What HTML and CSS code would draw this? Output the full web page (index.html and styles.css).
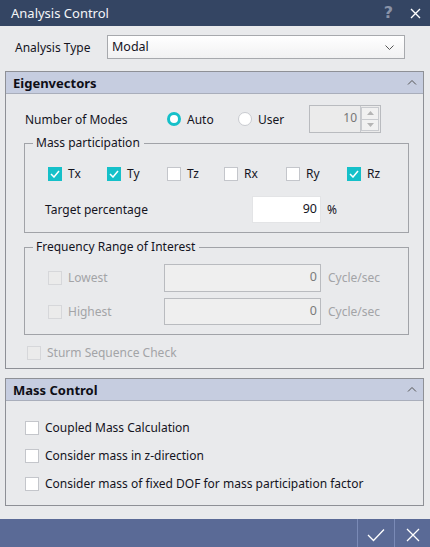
FILE: index.html
```html
<!DOCTYPE html>
<html>
<head>
<meta charset="utf-8">
<link rel="stylesheet" href="styles.css">
</head>
<body>
<div class="dialog">
  <header class="titlebar">
    <span class="title">Analysis Control</span>
    <span class="tb-icons">
      <span class="help">?</span>
      <svg class="tb-close" width="11" height="11" viewBox="0 0 11 11"><path d="M1 1L10 10M10 1L1 10" stroke="#fff" stroke-width="1.4" fill="none"/></svg>
    </span>
  </header>

  <main class="content">
    <div class="type-row">
      <span class="type-label">Analysis Type</span>
      <div class="select">
        <span>Modal</span>
        <svg width="9" height="5" viewBox="0 0 9 5"><path d="M0.5 0.5L4.5 4.5L8.5 0.5" stroke="#555" stroke-width="1" fill="none"/></svg>
      </div>
    </div>

    <section class="panel">
      <div class="panel-header">
        <span>Eigenvectors</span>
        <svg width="10" height="6" viewBox="0 0 10 6"><path d="M1 5.5L5 1.5L9 5.5" stroke="#555" stroke-width="1" fill="none"/></svg>
      </div>
      <div class="panel-body eig-body">
        <div class="modes-row">
          <span class="modes-label">Number of Modes</span>
          <span class="radio on"></span><span class="radio-text">Auto</span>
          <span class="radio"></span><span class="radio-text user">User</span>
          <div class="spin">
            <span class="spin-val">10</span>
            <span class="spin-btns">
              <span class="spin-btn"><svg width="7" height="4" viewBox="0 0 7 4"><path d="M0 4L3.5 0L7 4Z" fill="#b5b5b5"/></svg></span>
              <span class="spin-btn"><svg width="7" height="4" viewBox="0 0 7 4"><path d="M0 0L3.5 4L7 0Z" fill="#b5b5b5"/></svg></span>
            </span>
          </div>
        </div>

        <fieldset class="group mass-group">
          <legend>Mass participation</legend>
          <div class="dof-row">
            <label class="check"><span class="box checked"><svg width="10" height="8" viewBox="0 0 10 8"><path d="M1 4L4 7L9 1" stroke="#fff" stroke-width="1.5" fill="none"/></svg></span>Tx</label>
            <label class="check"><span class="box checked"><svg width="10" height="8" viewBox="0 0 10 8"><path d="M1 4L4 7L9 1" stroke="#fff" stroke-width="1.5" fill="none"/></svg></span>Ty</label>
            <label class="check"><span class="box"></span>Tz</label>
            <label class="check"><span class="box"></span>Rx</label>
            <label class="check"><span class="box"></span>Ry</label>
            <label class="check"><span class="box checked"><svg width="10" height="8" viewBox="0 0 10 8"><path d="M1 4L4 7L9 1" stroke="#fff" stroke-width="1.5" fill="none"/></svg></span>Rz</label>
          </div>
          <div class="target-row">
            <span class="target-label">Target percentage</span>
            <span class="num-input">90</span>
            <span class="unit">%</span>
          </div>
        </fieldset>

        <fieldset class="group freq-group">
          <legend>Frequency Range of Interest</legend>
          <div class="freq-row">
            <label class="check disabled"><span class="box"></span>Lowest</label>
            <span class="num-input dis">0</span>
            <span class="unit dis-text">Cycle/sec</span>
          </div>
          <div class="freq-row">
            <label class="check disabled"><span class="box"></span>Highest</label>
            <span class="num-input dis">0</span>
            <span class="unit dis-text">Cycle/sec</span>
          </div>
        </fieldset>

        <label class="check disabled sturm"><span class="box"></span>Sturm Sequence Check</label>
      </div>
    </section>

    <section class="panel mass-panel">
      <div class="panel-header">
        <span>Mass Control</span>
        <svg width="10" height="6" viewBox="0 0 10 6"><path d="M1 5.5L5 1.5L9 5.5" stroke="#555" stroke-width="1" fill="none"/></svg>
      </div>
      <div class="panel-body mass-body">
        <label class="check"><span class="box"></span>Coupled Mass Calculation</label>
        <label class="check"><span class="box"></span>Consider mass in z-direction</label>
        <label class="check"><span class="box"></span>Consider mass of fixed DOF for mass participation factor</label>
      </div>
    </section>
  </main>

  <footer class="bottombar">
    <button class="bb-btn ok"><svg width="18" height="14" viewBox="0 0 18 14"><path d="M1 7L6.5 12.5L17 1.5" stroke="#fff" stroke-width="1.3" fill="none"/></svg></button>
    <button class="bb-btn cancel"><svg width="14" height="14" viewBox="0 0 14 14"><path d="M1 1L13 13M13 1L1 13" stroke="#fff" stroke-width="1.3" fill="none"/></svg></button>
  </footer>
</div>
</body>
</html>
```

FILE: styles.css
```css
* { box-sizing: border-box; }
html, body { margin: 0; padding: 0; }
body {
  width: 430px;
  height: 547px;
  overflow: hidden;
  font-family: "Noto Sans", "Open Sans", sans-serif;
  font-size: 12px;
  line-height: 16px;
  color: #14141e;
  background: #e9eaec;
}
.dialog {
  width: 430px;
  height: 547px;
  display: flex;
  flex-direction: column;
}
.titlebar {
  height: 26px;
  background: #344563;
  display: flex;
  align-items: center;
  padding: 0 9px 0 11px;
  color: #f4f5f8;
  flex: none;
}
.title { font-size: 13px; flex: 1; }
.tb-icons { display: flex; align-items: center; gap: 17px; }
.help { color: #8a93a8; font-weight: bold; font-size: 16px; font-family: "DejaVu Sans", sans-serif; line-height: 16px; }
.tb-close { display: block; }

.content {
  flex: 1;
  min-height: 0;
  display: flex;
  flex-direction: column;
  padding: 9px 6px 0 5px;
}
.type-row {
  display: flex;
  align-items: center;
  height: 24px;
  flex: none;
}
.type-label { width: 102px; padding-left: 10px; padding-top: 2px; }
.select {
  width: 298px;
  height: 24px;
  border: 1px solid #a7a9ad;
  background: linear-gradient(#ffffff, #f1f1f2);
  display: flex;
  align-items: center;
  justify-content: space-between;
  padding: 0 10px 0 4px;
  font-size: 12.5px;
}
.select svg { display: block; }

.panel {
  margin-top: 12px;
  border: 1px solid #8e9096;
  display: flex;
  flex-direction: column;
  flex: none;
}
.panel-header {
  height: 22px;
  background: #c6cde0;
  border-bottom: 1px solid #a9aebb;
  display: flex;
  align-items: center;
  justify-content: space-between;
  padding: 0 6px 0 7px;
  font-weight: bold;
  font-size: 13px;
  color: #0e0e16;
}
.panel-header svg { display: block; margin-top: -2px; }
.panel-body { display: flex; flex-direction: column; }
.eig-body { padding: 11px 14px 7px 18px; }

.modes-row {
  display: flex;
  align-items: center;
  height: 28px;
}
.modes-label { width: 143px; padding-left: 1px; padding-top: 1px; }
.radio {
  width: 14px;
  height: 14px;
  border-radius: 50%;
  background: #fff;
  border: 1px solid #c9cbd0;
  flex: none;
}
.radio.on { border: 3px solid #15c0c9; }
.radio-text { margin-left: 6px; width: 51px; padding-top: 1px; }
.radio-text.user { width: 51px; }
.spin {
  width: 72px;
  height: 28px;
  border: 1px solid #b9bbbf;
  background: #ebebeb;
  display: flex;
  align-items: stretch;
}
.spin-val {
  flex: 1;
  text-align: right;
  padding-right: 3px;
  color: #767676;
  line-height: 24px;
}
.spin-btns {
  width: 20px;
  display: flex;
  flex-direction: column;
  border-left: 1px solid #c6c8cc;
  padding: 1px 1px 1px 0;
}
.spin-btn {
  flex: 1;
  display: flex;
  align-items: center;
  justify-content: center;
  border: 1px solid #c9cbcf;
  background: #f1f1f1;
}
.spin-btn + .spin-btn { border-top: none; }
.spin-btn svg { display: block; }

.group {
  margin: 2px 0 0 0;
  border: 1px solid #a1a3a8;
  padding: 0 0 9px 23px;
}
.group legend {
  padding: 0 4px 0 3px;
  margin-left: -15px;
  line-height: 16px;
}
.mass-group { margin-top: 2px; }
.dof-row {
  display: grid;
  grid-template-columns: 59px 60px 57px 62px 61px auto;
  margin-top: 15px;
  height: 16px;
  align-items: center;
}
.check {
  display: flex;
  align-items: center;
  gap: 6px;
  white-space: nowrap;
  height: 16px;
}
.box {
  width: 14px;
  height: 14px;
  border: 1px solid #c4c6cb;
  background: #fff;
  flex: none;
  display: flex;
  align-items: center;
  justify-content: center;
}
.box.checked { background: #15c0c9; border-color: #15c0c9; }
.box svg { display: block; }
.check.disabled { color: #a3a4a7; }
.check.disabled .box { background: #ebebeb; border-color: #d6d7da; }

.target-row {
  display: flex;
  align-items: center;
  margin-top: 14px;
  height: 27px;
}
.target-label { width: 207px; margin-left: -3px; }
.num-input {
  width: 69px;
  height: 27px;
  background: #fff;
  border: 1px solid #e3e4e6;
  text-align: right;
  padding-right: 3px;
  line-height: 24px;
  font-size: 12.5px;
}
.unit { margin-left: 6px; }

.freq-group { margin-top: 6px; padding-bottom: 9px; }
.freq-row {
  display: flex;
  align-items: center;
  height: 27px;
}
.freq-row:first-of-type { margin-top: 9px; height: 28px; }
.freq-row + .freq-row { margin-top: 6px; }
.freq-row .check { width: 116px; }
.num-input.dis {
  width: 157px;
  background: #efefef;
  border: 1px solid #b9bbbf;
  color: #7b7b7b;
  height: 100%;
}
.dis-text { color: #a3a4a7; margin-left: 7px; }

.sturm { margin: 10px 0 0 3px; }

.mass-panel { margin-top: 9px; }
.mass-body {
  padding: 19px 14px 13px 19px;
  gap: 12px;
}

.bottombar {
  height: 28px;
  margin-top: auto;
  background: #5a6a96;
  display: flex;
  justify-content: flex-end;
  flex: none;
}
.bb-btn {
  width: 37px;
  height: 28px;
  border: none;
  border-left: 1px solid #7a8ab6;
  background: transparent;
  padding: 0;
  display: flex;
  align-items: center;
  justify-content: center;
}
.bb-btn.cancel { width: 36px; }
.bb-btn svg { display: block; margin-top: 4px; }
```
